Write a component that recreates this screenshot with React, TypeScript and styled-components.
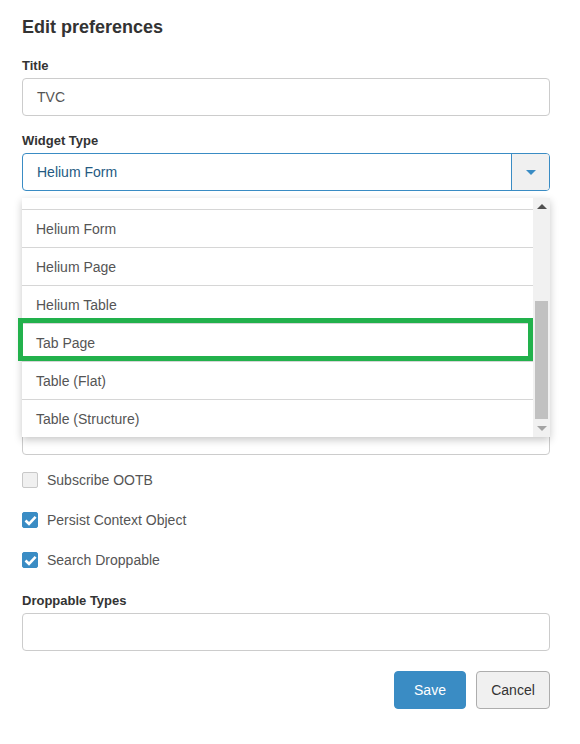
import React from "react";
import styled, {createGlobalStyle} from "styled-components";

const GlobalStyle = createGlobalStyle`
  body {
    margin: 0;
    background: #fff;
    font-family: "Liberation Sans", Arial, sans-serif;
    color: #333;
  }
`
const Wrapper = styled.div`
  position: relative;
  width: 528px;
  padding: 15px 22px 0;
  display: flex;
  flex-direction: column;
`
const Heading = styled.h1`
  margin: 0 0 18px;
  font-size: 18px;
  line-height: 24px;
  font-weight: bold;
  color: #333;
`
const Label = styled.label`
  display: block;
  font-size: 13px;
  line-height: 18px;
  font-weight: bold;
  color: #333;
  margin-bottom: 3px;
`
const Group = styled.div<{ $gap?: number, $top?: number }>`
  margin-top: ${p => p.$top ?? 0}px;
  margin-bottom: ${p => p.$gap ?? 15}px;
`
const TextInput = styled.div`
  box-sizing: border-box;
  height: 38px;
  border: 1px solid #ccc;
  border-radius: 4px;
  padding: 0 14px;
  display: flex;
  align-items: center;
  font-size: 14px;
  color: #555;
`
const Select = styled.div`
  position: relative;
  box-sizing: border-box;
  height: 38px;
  border: 1px solid #3a8cc4;
  border-radius: 4px;
  display: flex;
  align-items: stretch;
  font-size: 14px;
  color: #245a82;
`
const SelectValue = styled.div`
  flex: 1;
  display: flex;
  align-items: center;
  padding-left: 14px;
`
const SelectToggle = styled.div`
  width: 37px;
  border-left: 1px solid #3a8cc4;
  background: #f0f0f0;
  border-radius: 0 3px 3px 0;
  display: flex;
  align-items: center;
  justify-content: center;
`
const Caret = styled.span<{ $color: string, $up?: boolean }>`
  width: 0;
  height: 0;
  border-left: 5px solid transparent;
  border-right: 5px solid transparent;
  ${p => p.$up ? `border-bottom: 5px solid ${p.$color};` : `border-top: 5px solid ${p.$color};`}
`
const Menu = styled.div`
  position: absolute;
  left: -1px;
  right: -1px;
  top: 44px;
  height: 239px;
  background: #fff;
  box-shadow: 0 3px 8px rgba(0, 0, 0, 0.22);
  display: flex;
  z-index: 2;
`
const MenuList = styled.div`
  flex: 1;
  overflow: hidden;
  padding-top: 11px;
`
const MenuItem = styled.div`
  box-sizing: border-box;
  height: 38px;
  border-top: 1px solid #d6d6d6;
  padding-left: 14px;
  display: flex;
  align-items: center;
  font-size: 14px;
  color: #555;
`
const ScrollTrack = styled.div`
  width: 17px;
  background: #f1f1f1;
  display: flex;
  flex-direction: column;
  align-items: center;
`
const ScrollArrow = styled.div`
  height: 17px;
  display: flex;
  align-items: center;
  justify-content: center;
`
const ScrollSpace = styled.div`
  flex: 1;
  width: 13px;
  display: flex;
  flex-direction: column;
  justify-content: flex-end;
  padding-bottom: 1px;
`
const Thumb = styled.div`
  width: 13px;
  height: 118px;
  background: #c1c1c1;
`
const Highlight = styled.div`
  position: absolute;
  left: -4px;
  top: 120px;
  width: 515px;
  height: 43px;
  box-sizing: border-box;
  border: 5px solid #22b14c;
  pointer-events: none;
`
const CheckRow = styled.div`
  display: flex;
  align-items: center;
  gap: 9px;
  height: 20px;
  margin-bottom: 20px;
  font-size: 14px;
  color: #555;
`
const Box = styled.span<{ $checked?: boolean }>`
  box-sizing: border-box;
  width: 16px;
  height: 16px;
  border-radius: 2px;
  display: flex;
  align-items: center;
  justify-content: center;
  background: ${p => p.$checked ? "#3a8cc4" : "#f0f0f0"};
  border: 1px solid ${p => p.$checked ? "#3a8cc4" : "#c8c8c8"};
`
const Actions = styled.div`
  display: flex;
  justify-content: flex-end;
  gap: 10px;
`
const Button = styled.button<{ $primary?: boolean }>`
  box-sizing: border-box;
  height: 38px;
  padding: 0;
  width: ${p => p.$primary ? 72 : 74}px;
  border-radius: 4px;
  font-family: "Liberation Sans", Arial, sans-serif;
  font-size: 14px;
  cursor: pointer;
  background: ${p => p.$primary ? "#3a8cc4" : "#f0f0f0"};
  color: ${p => p.$primary ? "#fff" : "#333"};
  border: 1px solid ${p => p.$primary ? "#3a8cc4" : "#adadad"};
`

const options = ["Helium Form", "Helium Page", "Helium Table", "Tab Page", "Table (Flat)", "Table (Structure)"]

function Checkbox({label, checked}: { label: string, checked?: boolean }) {
    return <CheckRow>
        <Box $checked={checked}>
            {checked ? <svg width="13" height="11" viewBox="0 0 13 11">
                <path d="M1.5 5.5 L5 8.8 L11.6 1.8" fill="none" stroke="#fff" strokeWidth="2.6"/>
            </svg> : null}
        </Box>
        {label}
    </CheckRow>
}

export default function App() {
    return <Wrapper>
        <GlobalStyle/>
        <Heading>Edit preferences</Heading>
        <Group $gap={16}>
            <Label>Title</Label>
            <TextInput>TVC</TextInput>
        </Group>
        <Group $gap={0}>
            <Label>Widget Type</Label>
            <Select>
                <SelectValue>Helium Form</SelectValue>
                <SelectToggle><Caret $color="#3a8cc4"/></SelectToggle>
                <Menu>
                    <MenuList>
                        {options.map(o => <MenuItem key={o}>{o}</MenuItem>)}
                    </MenuList>
                    <ScrollTrack>
                        <ScrollArrow><Caret $color="#505050" $up/></ScrollArrow>
                        <ScrollSpace><Thumb/></ScrollSpace>
                        <ScrollArrow><Caret $color="#a3a3a3"/></ScrollArrow>
                    </ScrollTrack>
                    <Highlight/>
                </Menu>
            </Select>
        </Group>
        <Group $top={226}>
            <TextInput/>
        </Group>
        <Checkbox label="Subscribe OOTB"/>
        <Checkbox label="Persist Context Object" checked/>
        <Checkbox label="Search Droppable" checked/>
        <Group $top={2} $gap={20}>
            <Label>Droppable Types</Label>
            <TextInput/>
        </Group>
        <Actions>
            <Button $primary>Save</Button>
            <Button>Cancel</Button>
        </Actions>
    </Wrapper>
}
